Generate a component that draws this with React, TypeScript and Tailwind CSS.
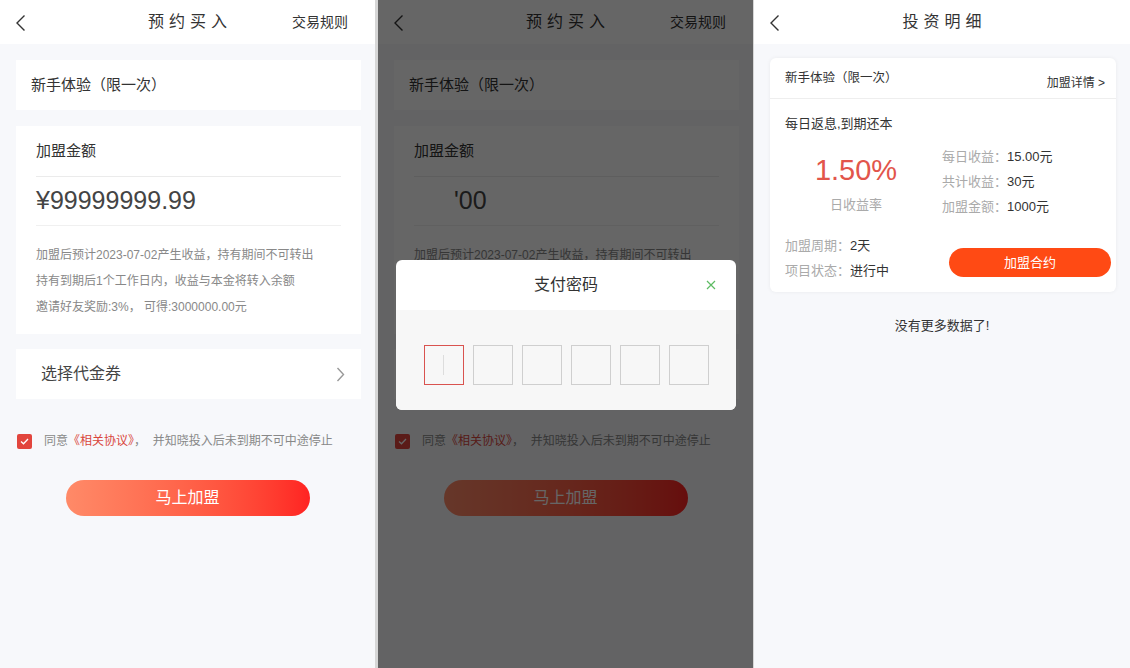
import React from "react";

const font = "font-['Liberation_Sans','Noto_Sans_CJK_SC',sans-serif]";

const BackIcon = () => (
  <svg width="12" height="18" viewBox="0 0 12 18" fill="none">
    <path d="M10.5 1.5L3 9l7.5 7.5" stroke="#333" strokeWidth="1.4" />
  </svg>
);

const Header = ({ title, right }: { title: string; right?: string }) => (
  <div className="grid h-[44px] shrink-0 grid-cols-[1fr_auto_1fr] items-center bg-white">
    <div className="pl-[14px] pt-[1px]">
      <BackIcon />
    </div>
    <div className="pl-[5px] text-[16px] tracking-[5px] text-[#333]">{title}</div>
    <div className="justify-self-end pr-[27px] text-[14px] text-[#333]">{right}</div>
  </div>
);

const helper = [
  "加盟后预计2023-07-02产生收益，持有期间不可转出",
  "持有到期后1个工作日内，收益与本金将转入余额",
  "邀请好友奖励:3%， 可得:3000000.00元",
];

const BuyScreen = ({ amount }: { amount: React.ReactNode }) => (
  <div className="flex h-full flex-col bg-[#f7f8fb]">
    <Header title="预约买入" right="交易规则" />

    <div className="ml-[16px] mr-[14px] mt-[16px] flex h-[50px] items-center bg-white pl-[15px] text-[15px] text-[#333]">
      新手体验（限一次）
    </div>

    {/* amount card */}
    <div className="ml-[16px] mr-[14px] mt-[16px] bg-white px-[20px] pb-[14px]">
      <div className="border-b border-[#ebebeb] pb-[15px] pt-[15px] text-[15px] leading-[20px] text-[#333]">
        加盟金额
      </div>
      <div className="flex h-[49px] items-center border-b border-[#f0f0f0] text-[25px] text-[#444]">
        {amount}
      </div>
      <div className="pt-[16px]">
        {helper.map((h) => (
          <div key={h} className="text-[12px] leading-[26px] text-[#888]">
            {h}
          </div>
        ))}
      </div>
    </div>

    <div className="ml-[16px] mr-[14px] mt-[15px] flex h-[50px] items-center justify-between bg-white pl-[25px] pr-[16px] text-[16px] text-[#444]">
      <span>选择代金券</span>
      <svg width="9" height="15" viewBox="0 0 9 15" fill="none">
        <path d="M1.5 1l6 6.5-6 6.5" stroke="#999" strokeWidth="1.4" />
      </svg>
    </div>

    <div className="mt-[33px] flex items-center pl-[17px]">
      <div className="flex h-[15px] w-[15px] items-center justify-center rounded-[2px] bg-[#e2453d]">
        <svg width="9" height="7" viewBox="0 0 9 7" fill="none">
          <path d="M1 3.5l2.5 2.3L8 1" stroke="#fff" strokeWidth="1.3" />
        </svg>
      </div>
      <div className="ml-[12px] whitespace-pre text-[12px] text-[#888]">
        同意<span className="text-[#d9463c]">《相关协议》</span>，  并知晓投入后未到期不可中途停止
      </div>
    </div>

    <button className="mx-auto mt-[30px] flex h-[36px] w-[244px] items-center justify-center rounded-full bg-gradient-to-r from-[#ff8a68] to-[#ff2222] text-[16px] text-white">
      马上加盟
    </button>
  </div>
);

const PasswordModal = () => (
  <div className="absolute left-[18px] top-[260px] w-[340px] overflow-hidden rounded-[6px] bg-white">
    <div className="relative flex h-[50px] items-center justify-center text-[16px] text-[#333]">
      支付密码
      <svg className="absolute right-[20px] top-[20px]" width="10" height="10" viewBox="0 0 10 10" fill="none">
        <path d="M1 1l8 8M9 1l-8 8" stroke="#5dbb63" strokeWidth="1.2" />
      </svg>
    </div>
    <div className="flex h-[100px] justify-center gap-[9px] bg-[#f7f7f7] pt-[35px]">
      {[0, 1, 2, 3, 4, 5].map((i) => (
        <div
          key={i}
          className={
            i === 0
              ? "flex h-[40px] w-[40px] items-center justify-center border border-[#d9534f] bg-[#f7f7f7]"
              : "h-[40px] w-[40px] border border-[#cfcfcf] bg-[#f7f7f7]"
          }
        >
          {i === 0 && <div className="h-[20px] w-px bg-[#ddd]" />}
        </div>
      ))}
    </div>
  </div>
);

const stats = [
  ["每日收益：", "15.00元"],
  ["共计收益：", "30元"],
  ["加盟金额：", "1000元"],
];

const DetailScreen = () => (
  <div className="flex h-full flex-col bg-[#f7f8fb]">
    <Header title="投资明细" />

    <div className="ml-[16px] mr-[14px] mt-[14px] rounded-[6px] bg-white shadow-[0_0_4px_rgba(0,0,0,0.06)]">
      <div className="flex h-[41px] justify-between border-b border-[#eee] pl-[15px] pr-[11px]">
        <span className="pt-[11px] text-[12.5px] leading-[18px] text-[#333]">新手体验（限一次）</span>
        <span className="pt-[17px] text-[12px] leading-[16px] text-[#333]">加盟详情 &gt;</span>
      </div>

      <div className="pl-[15px] pt-[15px] text-[13px] leading-[20px] text-[#333]">每日返息,到期还本</div>

      <div className="mt-[10px] flex">
        <div className="flex w-[172px] flex-col items-center pt-[8px]">
          <div className="text-[29px] leading-[36px] text-[#e2554b]">1.50%</div>
          <div className="mt-[7px] text-[13px] leading-[20px] text-[#aaa]">日收益率</div>
        </div>
        <div>
          {stats.map(([k, v]) => (
            <div key={k} className="text-[13px] leading-[25px]">
              <span className="text-[#aaa]">{k}</span>
              <span className="text-[#333]">{v}</span>
            </div>
          ))}
        </div>
      </div>

      <div className="mt-[14px] flex items-end justify-between pb-[9px] pl-[15px] pr-[5px]">
        <div>
          <div className="text-[13px] leading-[25px]">
            <span className="text-[#aaa]">加盟周期：</span>
            <span className="text-[#333]">2天</span>
          </div>
          <div className="text-[13px] leading-[25px]">
            <span className="text-[#aaa]">项目状态：</span>
            <span className="text-[#333]">进行中</span>
          </div>
        </div>
        <button className="mb-[6px] flex h-[29px] w-[162px] items-center justify-center rounded-full bg-[#ff4a14] text-[13px] text-white">
          加盟合约
        </button>
      </div>
    </div>

    <div className="mt-[24px] text-center text-[13px] leading-[20px] text-[#333]">没有更多数据了!</div>
  </div>
);

export default function App() {
  return (
    <div className={`flex h-[668px] w-[1130px] bg-[#d6d6d6] ${font}`}>
      <div className="h-full w-[375px] shrink-0">
        <BuyScreen amount="¥99999999.99" />
      </div>

      <div className="relative ml-[3px] h-full w-[375px] shrink-0">
        <BuyScreen amount={<span className="pl-[40px]">'00</span>} />
        <div className="absolute inset-0 bg-black/60" />
        <PasswordModal />
      </div>

      <div className="ml-px h-full flex-1">
        <DetailScreen />
      </div>
    </div>
  );
}
